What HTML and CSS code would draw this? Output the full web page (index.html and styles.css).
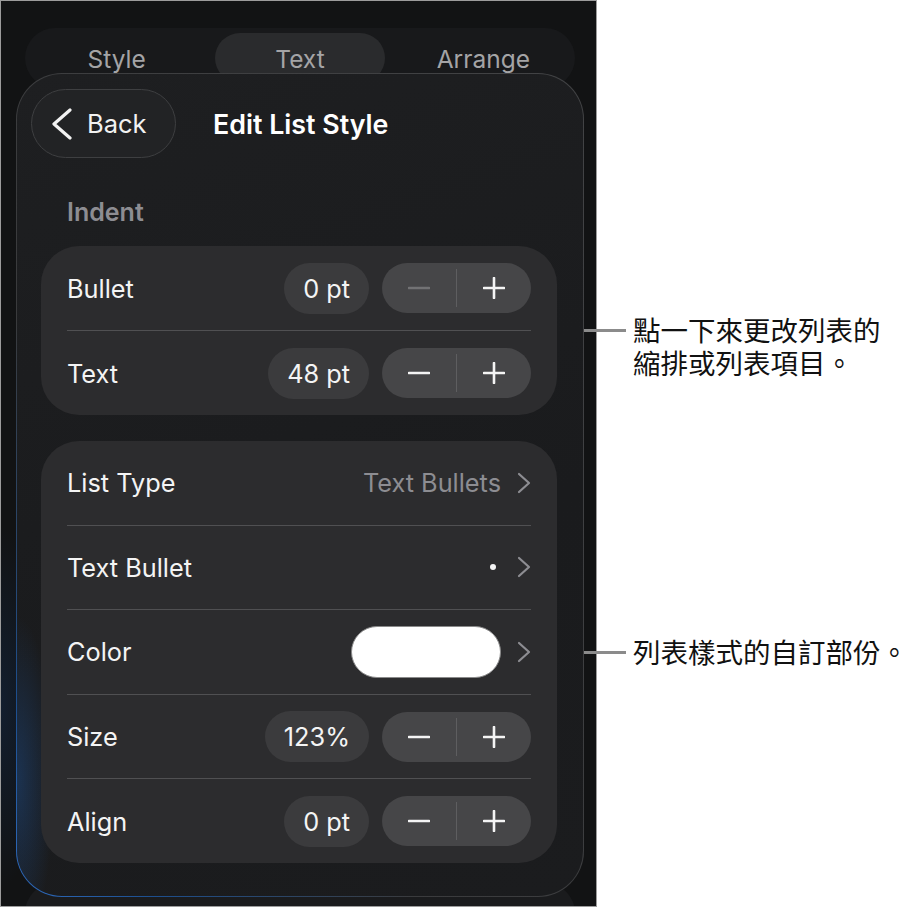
FILE: index.html
```html
<!DOCTYPE html>
<html lang="zh-Hant">
<head>
<meta charset="utf-8">
<title>Edit List Style</title>
<link rel="stylesheet" href="styles.css">
</head>
<body>
<div class="page">
  <div class="phone">
    <div class="tabs">
      <div class="tab">Style</div>
      <div class="tab active">Text</div>
      <div class="tab">Arrange</div>
    </div>
    <div class="panel">
      <div class="header">
        <div class="back">
          <svg class="back-chev" width="20" height="32" viewBox="0 0 20 32"><polyline points="18,2 2,16 18,30" fill="none" stroke="#f2f2f2" stroke-width="3.2" stroke-linecap="round" stroke-linejoin="round"/></svg>
          <span>Back</span>
        </div>
        <div class="title">Edit List Style</div>
      </div>
      <div class="section-label">Indent</div>
      <div class="group">
        <div class="row">
          <span class="label">Bullet</span>
          <span class="controls">
            <span class="value">0 pt</span>
            <span class="stepper">
              <span class="step dim"><svg width="22" height="22" viewBox="0 0 22 22"><line x1="1" y1="11" x2="21" y2="11"/></svg></span>
              <span class="step-sep"></span>
              <span class="step"><svg width="22" height="22" viewBox="0 0 22 22"><line x1="1" y1="11" x2="21" y2="11"/><line x1="11" y1="1" x2="11" y2="21"/></svg></span>
            </span>
          </span>
        </div>
        <div class="divider"></div>
        <div class="row">
          <span class="label">Text</span>
          <span class="controls">
            <span class="value">48 pt</span>
            <span class="stepper">
              <span class="step"><svg width="22" height="22" viewBox="0 0 22 22"><line x1="1" y1="11" x2="21" y2="11"/></svg></span>
              <span class="step-sep"></span>
              <span class="step"><svg width="22" height="22" viewBox="0 0 22 22"><line x1="1" y1="11" x2="21" y2="11"/><line x1="11" y1="1" x2="11" y2="21"/></svg></span>
            </span>
          </span>
        </div>
      </div>
      <div class="group group-list">
        <div class="row">
          <span class="label">List Type</span>
          <span class="controls nav">
            <span class="detail">Text Bullets</span>
            <svg class="chev" width="16" height="22" viewBox="0 0 16 22"><polyline points="3,2 13,11 3,20" fill="none" stroke="#8d8d92" stroke-width="2.2" stroke-linecap="round" stroke-linejoin="round"/></svg>
          </span>
        </div>
        <div class="divider"></div>
        <div class="row">
          <span class="label">Text Bullet</span>
          <span class="controls nav">
            <span class="bullet-dot"></span>
            <svg class="chev" width="16" height="22" viewBox="0 0 16 22"><polyline points="3,2 13,11 3,20" fill="none" stroke="#8d8d92" stroke-width="2.2" stroke-linecap="round" stroke-linejoin="round"/></svg>
          </span>
        </div>
        <div class="divider"></div>
        <div class="row">
          <span class="label">Color</span>
          <span class="controls nav">
            <span class="swatch"></span>
            <svg class="chev" width="16" height="22" viewBox="0 0 16 22"><polyline points="3,2 13,11 3,20" fill="none" stroke="#8d8d92" stroke-width="2.2" stroke-linecap="round" stroke-linejoin="round"/></svg>
          </span>
        </div>
        <div class="divider"></div>
        <div class="row">
          <span class="label">Size</span>
          <span class="controls">
            <span class="value">123%</span>
            <span class="stepper">
              <span class="step"><svg width="22" height="22" viewBox="0 0 22 22"><line x1="1" y1="11" x2="21" y2="11"/></svg></span>
              <span class="step-sep"></span>
              <span class="step"><svg width="22" height="22" viewBox="0 0 22 22"><line x1="1" y1="11" x2="21" y2="11"/><line x1="11" y1="1" x2="11" y2="21"/></svg></span>
            </span>
          </span>
        </div>
        <div class="divider"></div>
        <div class="row">
          <span class="label">Align</span>
          <span class="controls">
            <span class="value">0 pt</span>
            <span class="stepper">
              <span class="step"><svg width="22" height="22" viewBox="0 0 22 22"><line x1="1" y1="11" x2="21" y2="11"/></svg></span>
              <span class="step-sep"></span>
              <span class="step"><svg width="22" height="22" viewBox="0 0 22 22"><line x1="1" y1="11" x2="21" y2="11"/><line x1="11" y1="1" x2="11" y2="21"/></svg></span>
            </span>
          </span>
        </div>
      </div>
    </div>
    <div class="next-card"></div>
  </div>

  <div class="bracket bracket-1"></div>
  <div class="leader leader-1"></div>
  <div class="note note-1"><div class="note-line">點一下來更改列表的</div><div class="note-line">縮排或列表項目。</div></div>

  <div class="bracket bracket-2"></div>
  <div class="leader leader-2"></div>
  <div class="note note-2"><div class="note-line">列表樣式的自訂部份。</div></div>
</div>
</body>
</html>
```
FILE: styles.css
```css
* { box-sizing: border-box; }
html, body {
  margin: 0;
  padding: 0;
  background: #ffffff;
}
.page {
  position: relative;
  width: 918px;
  height: 907px;
  font-family: Inter, "Noto Sans", sans-serif;
}
.phone {
  width: 597px;
  height: 907px;
  border: 1px solid #9c9c9c;
  background:
    radial-gradient(ellipse 60px 260px at 0 78%, rgba(20, 70, 140, 0.22), transparent 70%),
    #121314;
  overflow: hidden;
  display: flex;
  flex-direction: column;
}
.tabs {
  margin: 27px 21px 0 24px;
  height: 60px;
  padding: 5px 0;
  border-radius: 30px;
  background: #18191b;
  display: grid;
  grid-template-columns: 1fr 1fr 1fr;
  flex-shrink: 0;
}
.tab {
  display: flex;
  align-items: center;
  justify-content: center;
  color: #a4a4a6;
  font-size: 24.5px;
  border-radius: 25px;
  margin: 0 7px;
  padding-top: 1px;
}
.tab.active {
  background: #2a2b2d;
}
.panel {
  position: relative;
  z-index: 1;
  margin: -15px 12px 0 15px;
  height: 824px;
  flex-shrink: 0;
  border-radius: 46px;
  border: 1.5px solid transparent;
  padding: 0 26px 0 24px;
  background:
    radial-gradient(ellipse 50px 220px at 0 86%, rgba(30, 100, 190, 0.32), transparent 75%) padding-box,
    linear-gradient(160deg, #1e1f21 0%, #1a1b1d 60%, #1b1c1e 100%) padding-box,
    linear-gradient(to top right, #2f6cc0 0%, #1d4f8f 12%, #3a3b3d 35%, #424345 100%) border-box;
}
.header {
  display: flex;
  align-items: center;
  margin: 15px 0 0 -10px;
}
.back {
  width: 145px;
  height: 69px;
  border-radius: 35px;
  border: 1.5px solid #3e3f41;
  background: #222325;
  display: flex;
  align-items: center;
  padding-left: 20px;
  color: #f2f2f2;
  font-size: 25.5px;
}
.back-chev {
  margin-right: 15px;
}
.title {
  margin-left: 37px;
  color: #ffffff;
  font-size: 26.8px;
  font-weight: 600;
}
.section-label {
  margin: 39px 0 0 26px;
  font-size: 25px;
  line-height: 30px;
  font-weight: 600;
  color: #8d8d92;
}
.group {
  margin-top: 19px;
  background: #2c2c2e;
  border-radius: 38px;
}
.group-list {
  margin-top: 26px;
}
.row {
  height: 84px;
  padding: 0 26px;
  display: flex;
  align-items: center;
  justify-content: space-between;
}
.group-list .row {
  height: 83.6px;
}
.label {
  color: #f4f4f4;
  font-size: 25.3px;
}
.divider {
  height: 1px;
  margin: 0 26px;
  background: #505052;
}
.controls {
  display: flex;
  align-items: center;
  gap: 13px;
}
.controls.nav {
  gap: 15px;
  margin-right: -1px;
}
.value {
  height: 51px;
  padding: 0 19px;
  border-radius: 26px;
  background: #3b3b3d;
  color: #f4f4f4;
  font-size: 25.3px;
  display: flex;
  align-items: center;
}
.stepper {
  width: 149px;
  height: 50px;
  border-radius: 25px;
  background: #464648;
  display: flex;
  align-items: center;
}
.step {
  flex: 1;
  display: flex;
  align-items: center;
  justify-content: center;
}
.step svg line {
  stroke: #f4f4f4;
  stroke-width: 2.6;
  stroke-linecap: round;
}
.step.dim svg line {
  stroke: #727274;
}
.step-sep {
  width: 1.5px;
  height: 38px;
  background: #5e5e60;
}
.detail {
  color: #8d8d92;
  font-size: 25.3px;
}
.bullet-dot {
  width: 6px;
  height: 6px;
  border-radius: 50%;
  background: #f4f4f4;
  margin-right: 5px;
}
.swatch {
  width: 150px;
  height: 52px;
  border-radius: 26px;
  background: #ffffff;
  border: 1px solid #8a8a8a;
}
.chev {
  display: block;
}
.next-card {
  margin: -14px 21px 0 24px;
  height: 60px;
  border-radius: 30px;
  background: #1a1b1d;
  flex-shrink: 0;
}
.bracket {
  position: absolute;
  left: 562px;
  width: 11px;
  border: 2.5px solid #8b8b8b;
  border-left: none;
}
.bracket-1 { top: 245px; height: 170px; }
.bracket-2 { top: 440px; height: 424px; }
.leader {
  position: absolute;
  left: 572px;
  width: 54px;
  height: 2.5px;
  background: #8b8b8b;
}
.leader-1 { top: 329px; }
.leader-2 { top: 651px; }
.note {
  position: absolute;
  left: 633px;
  font-family: "Noto Sans CJK TC", "Noto Sans", sans-serif;
  font-size: 27.5px;
  color: #111111;
}
.note-line {
  height: 33px;
  line-height: 33px;
  white-space: nowrap;
}
.note-1 { top: 313px; }
.note-2 { top: 635px; }
```
